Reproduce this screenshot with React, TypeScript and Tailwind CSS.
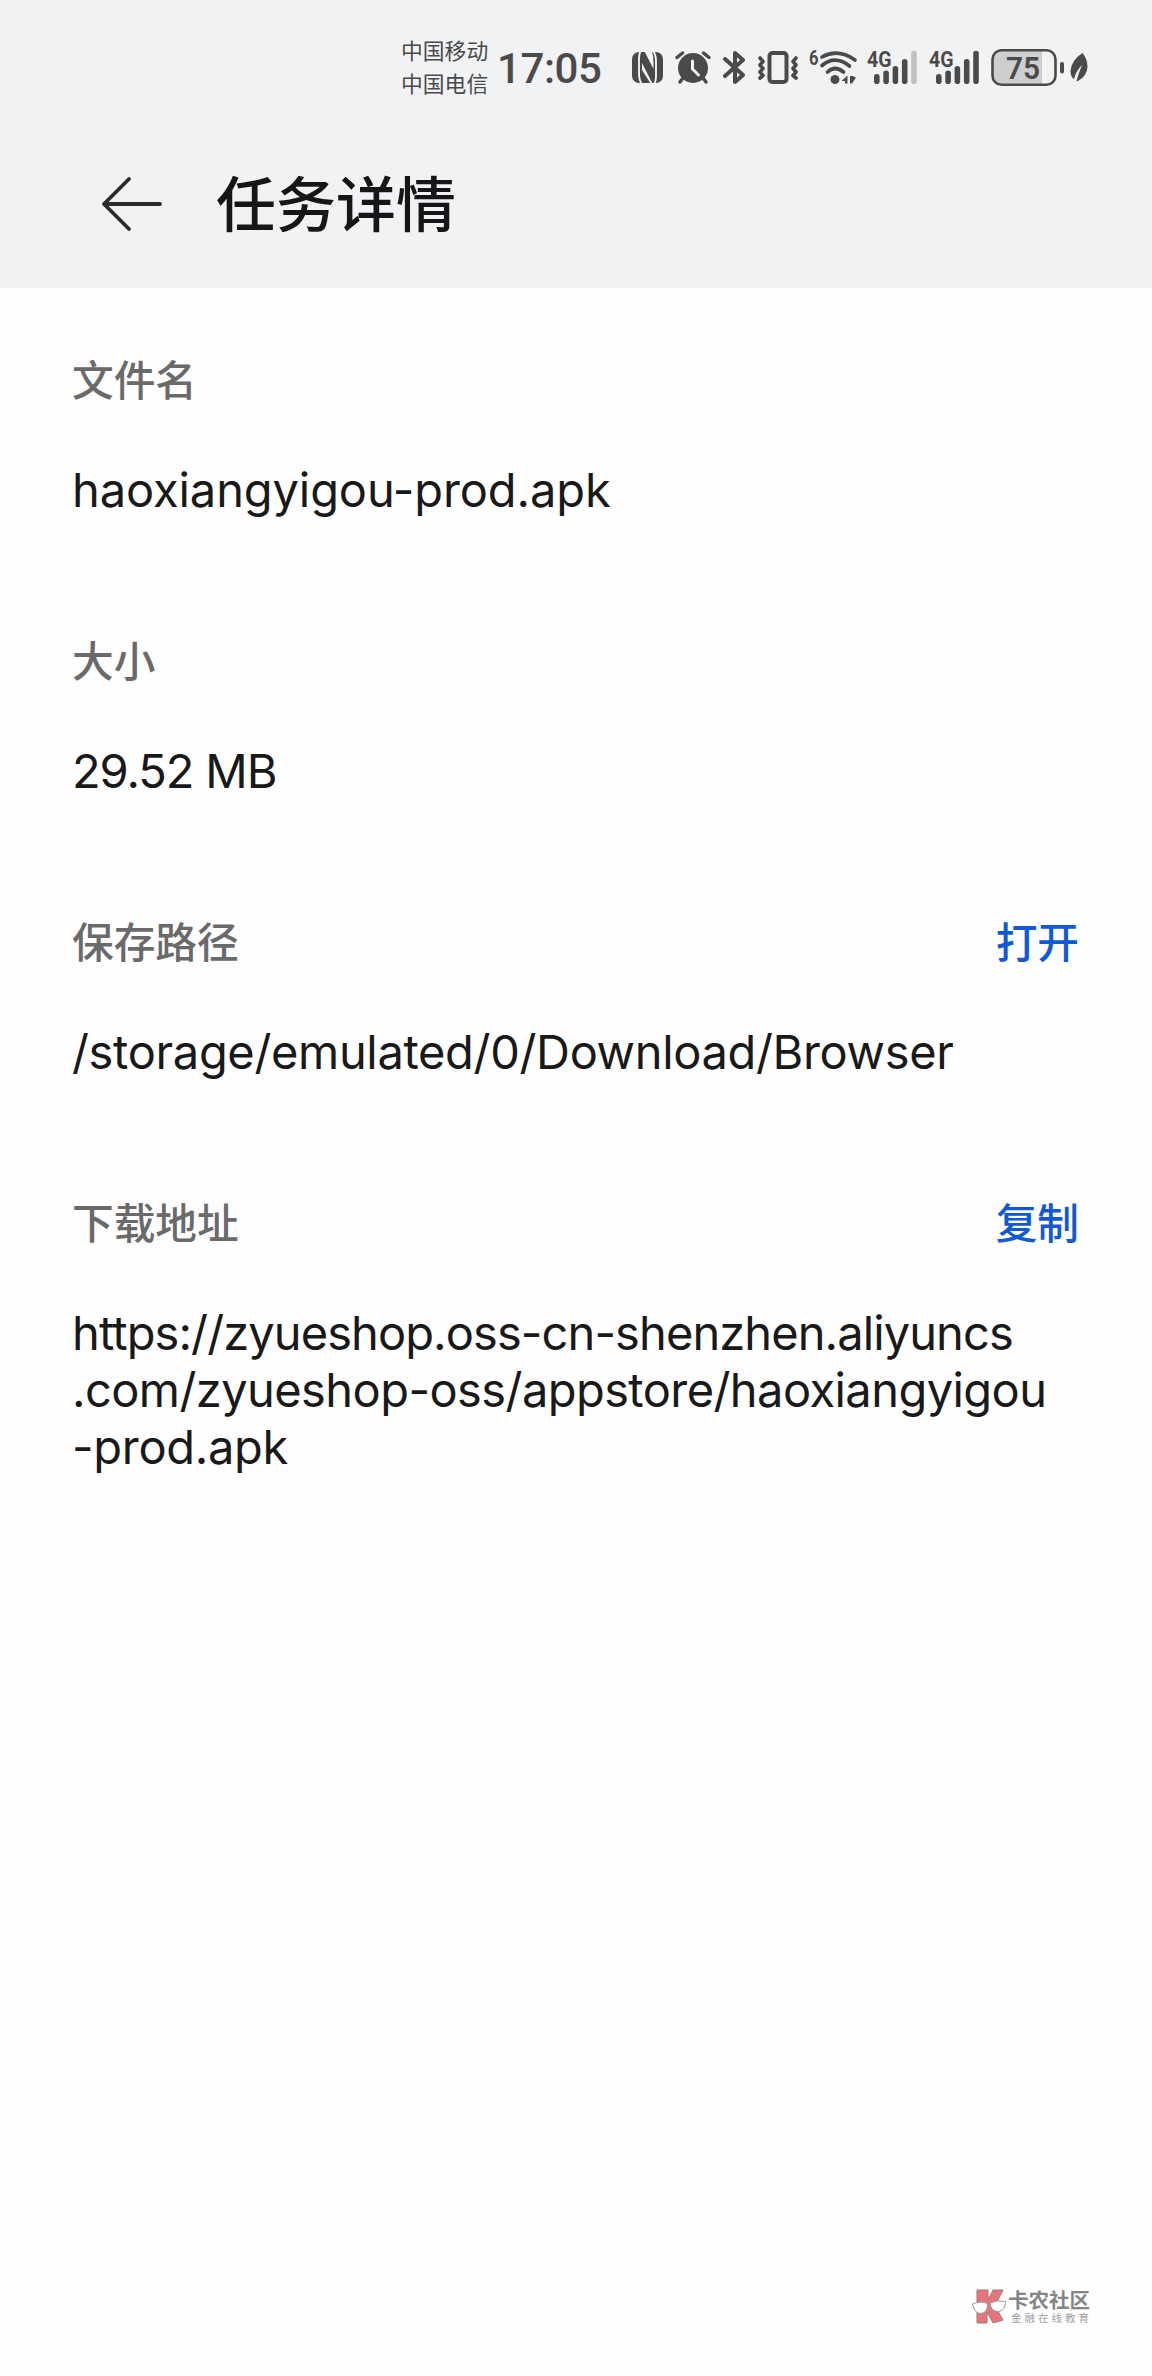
import React from 'react';

const INK = '#4a4a4b';

function NfcIcon() {
  return (
    <svg className="h-10 w-[31px]" viewBox="0 0 31 40">
      <rect x="0" y="4" width="31" height="31" rx="7" fill={INK} />
      <g fill="none" stroke="#f1f2f4" strokeWidth="1.900">
        <path d="M8.500 3.500 Q7 6 7 12 V25 Q7 32 9.500 35.500" />
        <path d="M21.500 3.500 Q24 7 24 14 V27 Q24 33 22.500 35.500" />
      </g>
      <path d="M12.500 3.500 H20 Q21.500 8 21.500 14 V21 Z" fill="#f1f2f4" />
      <path d="M10 15 L20.500 35.500 H18.500 L10 22 Z" fill="#f1f2f4" />
    </svg>
  );
}

function AlarmIcon() {
  return (
    <svg className="h-10 w-9" viewBox="0 0 36 40" fill="none" stroke={INK} strokeWidth="3.400" strokeLinecap="round">
      <circle cx="18" cy="20" r="15" fill={INK} stroke="none" />
      <path d="M2 9.500 L7.500 5 M34 9.500 L28.500 5 M7.500 30.500 L5 34 M28.500 30.500 L31 34" />
      <path d="M17.500 13 V21 L23.500 27" stroke="#f1f2f4" strokeWidth="3" />
    </svg>
  );
}

function BluetoothIcon() {
  return (
    <svg className="h-10 w-[22px]" viewBox="0 0 22 40">
      <path d="M2 11 L20 27 L12 34 V5 L20 12 L2 28" fill="none" stroke={INK} strokeWidth="4" strokeLinejoin="round" strokeLinecap="round" />
    </svg>
  );
}

function VibrateIcon() {
  return (
    <svg className="h-10 w-[42px]" viewBox="0 0 42 40" fill="none" stroke={INK} strokeWidth="3.600" strokeLinejoin="round" strokeLinecap="round">
      <rect x="12.500" y="5" width="17" height="29" rx="3" strokeWidth="4" />
      <path d="M3 10 L6 13.500 L3 17 L6 20.500 L3 24 L6 27.500 L3 30 M39 10 L36 13.500 L39 17 L36 20.500 L39 24 L36 27.500 L39 30" />
    </svg>
  );
}

function WifiIcon() {
  return (
    <svg className="h-10 w-12 overflow-visible" viewBox="0 0 48 40">
      <text x="0" y="17" fontSize="21" fontWeight="700" fill={INK} className="font-['Roboto',sans-serif]" textLength="9.500" lengthAdjust="spacingAndGlyphs">6</text>
      <g fill="none" stroke={INK} strokeWidth="3.700" strokeLinecap="round">
        <path d="M13 9 Q29 0 46 12" />
        <path d="M13 17.500 Q26 6.500 40.500 18" />
        <path d="M18.500 24 Q26 17 34.500 24" />
      </g>
      <circle cx="26" cy="31.500" r="4.500" fill={INK} />
      <path d="M38.500 27.500 V35.500 H36 V33 H32.500 Z M41 28 H43.500 L47 29.500 L43 35.500 H41 Z" fill={INK} />
    </svg>
  );
}

function SignalIcon({ last }: { last: string }) {
  return (
    <svg className="h-10 w-[50px] overflow-visible" viewBox="0 0 50 40">
      <text x="0" y="19" fontSize="22" fontWeight="700" fill={INK} className="font-['Roboto',sans-serif]" textLength="24.500" lengthAdjust="spacingAndGlyphs">4G</text>
      <g fill={INK}>
        <rect x="7" y="26" width="5.600" height="10" rx="2.800" />
        <rect x="16.300" y="22.500" width="5.600" height="13.500" rx="2.800" />
        <rect x="25.600" y="18" width="5.600" height="18" rx="2.800" />
        <rect x="34.900" y="11" width="5.600" height="25" rx="2.800" />
        <rect x="44.200" y="2.800" width="5.600" height="33.200" rx="2.800" fill={last} />
      </g>
    </svg>
  );
}

function BatteryIcon() {
  return (
    <svg className="h-10 w-[73px] overflow-visible" viewBox="0 0 73 40">
      <path d="M10 2.500 H51 V36.500 H10 Q2 36.500 2 28 V11 Q2 2.500 10 2.500" fill="#cdced0" />
      <rect x="1.500" y="2.300" width="63" height="34.400" rx="9" fill="none" stroke={INK} strokeWidth="2.600" />
      <rect x="69" y="14" width="4" height="11.500" rx="2" fill={INK} />
      <text x="15" y="30.500" fontSize="31" fontWeight="600" fill={INK} className="font-['Roboto',sans-serif]" textLength="34" lengthAdjust="spacingAndGlyphs">75</text>
    </svg>
  );
}

function LeafIcon() {
  return (
    <svg className="h-10 w-[18px]" viewBox="0 0 18 40">
      <path d="M12.500 5 Q17.500 11 17.500 19 Q17 28 8 33 L6.500 33 Q9 24 12 17 Q6 23 4 31 Q0.500 29 0.500 23 Q1.500 12 12.500 5" fill={INK} />
    </svg>
  );
}

function StatusBar() {
  return (
    <div className="flex h-[136px] items-start pl-[401px]">
      <div className="mt-[33px] w-[88px] text-[21.800px] leading-[33px] text-[#4a4a4b]">
        <div>中国移动</div>
        <div>中国电信</div>
      </div>
      <div className="mt-[39px] w-[143px] pl-2 font-['Roboto',sans-serif] text-[42px] leading-[60px] font-medium tracking-[-0.4px] text-[#4a4a4b]">17:05</div>
      <div className="mt-12 flex h-10">
        <NfcIcon />
        <div className="ml-3"><AlarmIcon /></div>
        <div className="ml-3"><BluetoothIcon /></div>
        <div className="ml-3"><VibrateIcon /></div>
        <div className="ml-2.5"><WifiIcon /></div>
        <div className="ml-2.5"><SignalIcon last="#bfc0c2" /></div>
        <div className="ml-3"><SignalIcon last={INK} /></div>
        <div className="ml-3"><BatteryIcon /></div>
        <div className="ml-1.5"><LeafIcon /></div>
      </div>
    </div>
  );
}

function TitleBar() {
  return (
    <div className="flex h-[152px] items-start">
      <svg className="mt-[38px] ml-[100px] h-[60px] w-16" viewBox="0 0 64 60" fill="none" stroke="#2b2b2d" strokeWidth="3.800" strokeLinecap="round" strokeLinejoin="round">
        <path d="M29 5 L4 30 L29 55 M4 30 H60" />
      </svg>
      <h1 className="mt-5 ml-[52px] text-[60px] leading-[90px] font-medium text-[#161618]">任务详情</h1>
    </div>
  );
}

type Line = { text: string; tracking: string };

function Section({ label, action, lines }: { label: string; action?: string; lines: Line[] }) {
  return (
    <section className="mb-[110px] last:mb-0">
      <div className="flex h-[62px] items-center justify-between text-[41.700px] leading-[62px] font-medium">
        <span className="text-[#6a6a6b]">{label}</span>
        {action && <button className="text-[#1259d3]">{action}</button>}
      </div>
      <div className="mt-[52px] font-['Inter',sans-serif] text-[47px] leading-[57px] whitespace-nowrap text-[#19191a]">
        {lines.map((line) => (
          <div key={line.text} className={line.tracking}>{line.text}</div>
        ))}
      </div>
    </section>
  );
}

function Watermark() {
  return (
    <div className="flex items-start self-end pr-[60px] pb-[52px]">
      <svg className="mt-px h-[35px] w-[34px]" viewBox="0 0 34 35">
        <path d="M5 1 H16 V11 L21 1 H31 L23 17 L31 31 L21 34 L15 23 V34 H5 Z" fill="#e8747c" stroke="#a0777b" strokeWidth="1" />
        <path d="M0.500 15 Q8 11.500 15.500 14.500 Q16 24 8.500 24.500 Q2 24 0.500 15" fill="#fff" stroke="#999" strokeWidth="1" />
        <path d="M18 14 Q26 10.500 33.500 12.500 Q33.500 22 26 22.500 Q19 22.500 18 14" fill="#fff" stroke="#999" strokeWidth="1" />
      </svg>
      <div className="ml-0.5">
        <div className="text-[20.500px] leading-[23px] font-bold text-[#858585]">卡农社区</div>
        <div className="pl-[3px] text-[10.500px] leading-[13px] tracking-[3px] text-[#a0a0a0]">金融在线教育</div>
      </div>
    </div>
  );
}

export default function App() {
  return (
    <div className="flex h-[2376px] w-[1152px] flex-col overflow-hidden bg-[#fefefe] font-['Noto_Sans_CJK_SC',sans-serif]">
      <header className="h-72 shrink-0 bg-[#f1f2f4]">
        <StatusBar />
        <TitleBar />
      </header>
      <main className="flex-1 pt-[59px] pr-[73px] pl-[72px]">
        <Section label="文件名" lines={[{ text: 'haoxiangyigou-prod.apk', tracking: 'tracking-[-0.1px]' }]} />
        <Section label="大小" lines={[{ text: '29.52 MB', tracking: 'tracking-[-1.1px]' }]} />
        <Section label="保存路径" action="打开" lines={[{ text: '/storage/emulated/0/Download/Browser', tracking: 'tracking-[-0.34px]' }]} />
        <Section
          label="下载地址"
          action="复制"
          lines={[
            { text: 'https://zyueshop.oss-cn-shenzhen.aliyuncs', tracking: 'tracking-[-0.9px]' },
            { text: '.com/zyueshop-oss/appstore/haoxiangyigou', tracking: 'tracking-[-0.57px]' },
            { text: '-prod.apk', tracking: 'tracking-[-0.3px]' },
          ]}
        />
      </main>
      <Watermark />
    </div>
  );
}
